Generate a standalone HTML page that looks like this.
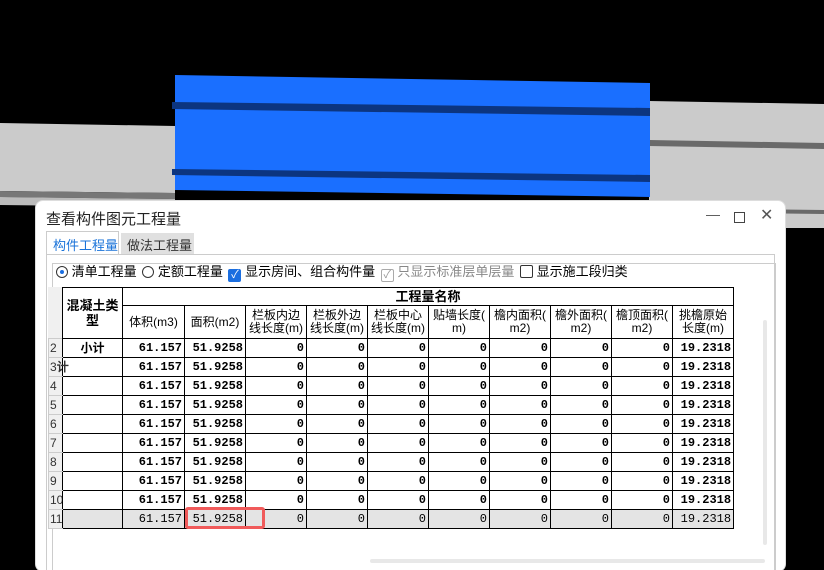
<!DOCTYPE html>
<html><head><meta charset="utf-8"><style>
*{margin:0;padding:0;box-sizing:border-box}
html,body{width:824px;height:570px;overflow:hidden}
body{background:#000;position:relative;font-family:"Liberation Sans","Noto Sans CJK SC",sans-serif;font-size:12px;color:#000}
.a{position:absolute}
table{border-collapse:collapse;position:absolute;left:48px;top:287px;table-layout:fixed;width:685px}
td{border:1px solid #000;height:19px;font-family:"Liberation Mono","Noto Sans CJK SC",monospace;font-size:12px;font-weight:bold;text-align:right;padding:0 2px;white-space:nowrap;overflow:hidden;line-height:17px}
td.h{font-family:"Liberation Sans","Noto Sans CJK SC",sans-serif;font-weight:normal;text-align:center;line-height:13px;font-size:12px;padding:0}
td.rn{background:#f0f0f0;border-color:#ccc;border-right:1px solid #000;color:#333;font-weight:normal;text-align:left;padding:0 1px;font-family:"Liberation Sans",sans-serif}
tr.last td{background:#e4e4e4;font-weight:normal}
tr.last td.rn{background:#f0f0f0}
</style></head><body>
<svg class="a" style="left:0;top:0" width="824" height="240">
<polygon points="0,123 175,126 175,193 0,191" fill="#cbcbcb"/>
<polygon points="0,191 175,193 175,199 0,197" fill="#777"/>
<polygon points="0,197 175,199 175,207 0,205" fill="#bbb"/>
<polygon points="649,101 824,104 824,228 649,228" fill="#cbcbcb"/>
<polygon points="649,140 824,143 824,149 649,146" fill="#6a6a6a"/>
<polygon points="649,208 824,210 824,214 649,212" fill="#6a6a6a"/>
<polygon points="175,75 650,83 650,197 175,190" fill="#1a6fff"/>
<polygon points="172,102 650,108 650,116 172,109" fill="#0c3580"/>
<polygon points="172,169 650,175 650,182 172,175" fill="#0c3580"/>
</svg>
<div class="a" style="left:35px;top:200px;width:751px;height:372px;background:#fff;border-radius:8px;border:1px solid #ddd"></div>
<div class="a" style="left:46px;top:208px;font-size:15px;color:#222">查看构件图元工程量</div>
<div class="a" style="left:706px;top:206px;font-size:14px;color:#555">—</div>
<div class="a" style="left:734px;top:212px;width:11px;height:11px;border:1px solid #444"></div>
<div class="a" style="left:760px;top:205px;font-size:16px;color:#555">✕</div>
<div class="a" style="left:46px;top:231px;width:73px;height:24px;background:#fff;border:1px solid #ccc;border-bottom:none;color:#1a73d9;font-size:13px;padding:3px 0 0 6px">构件工程量</div>
<div class="a" style="left:121px;top:233px;width:73px;height:21px;background:#e0e0e0;color:#333;font-size:13px;padding:2px 0 0 6px">做法工程量</div>
<div class="a" style="left:46px;top:254px;width:729px;height:320px;border:1px solid #ccc;border-bottom:none"></div>
<div class="a" style="left:52px;top:263px;width:724px;height:310px;border:1px solid #ccc"></div>
<div class="a" style="left:56px;top:264px;font-size:13px;white-space:nowrap;line-height:16px">
<span style="display:inline-block;width:12px;height:12px;border:1px solid #333;border-radius:50%;vertical-align:-2px;position:relative"><span style="position:absolute;left:3px;top:3px;width:4px;height:4px;background:#1a6ee0;border-radius:50%"></span></span> 清单工程量
<span style="display:inline-block;width:12px;height:12px;border:1px solid #333;border-radius:50%;vertical-align:-2px;margin-left:2px"></span> 定额工程量
<span style="display:inline-block;width:13px;height:13px;background:#1a6ee0;border-radius:2px;vertical-align:-2px;margin-left:2px;color:#fff;font-size:11px;line-height:13px;text-align:center">✓</span> 显示房间、组合构件量
<span style="display:inline-block;width:13px;height:13px;border:1px solid #aaa;border-radius:2px;vertical-align:-2px;margin-left:2px;color:#999;font-size:11px;line-height:11px;text-align:center">✓</span><span style="color:#888"> 只显示标准层单层量</span>
<span style="display:inline-block;width:13px;height:13px;border:1px solid #333;border-radius:2px;vertical-align:-2px;margin-left:2px"></span> 显示施工段归类
</div>
<div class="a" style="left:48px;top:287px;width:14px;height:51px;background:#f0f0f0"></div>
<table>
<colgroup><col style="width:14px"><col style="width:60px"><col style="width:62px"><col style="width:61px"><col style="width:61px"><col style="width:61px"><col style="width:61px"><col style="width:61px"><col style="width:61px"><col style="width:61px"><col style="width:61px"><col style="width:61px"></colgroup>
<tr><td class="rn" rowspan="2" style="border:none;background:#f0f0f0"></td><td class="h" rowspan="2" style="font-weight:bold;font-size:13px;line-height:15px">混凝土类<br>型</td><td class="h" colspan="10" style="font-weight:bold;font-size:13px;height:18px">工程量名称</td></tr>
<tr style="height:33px"><td class="h">体积(m3)</td><td class="h">面积(m2)</td><td class="h">栏板内边<br>线长度(m)</td><td class="h">栏板外边<br>线长度(m)</td><td class="h">栏板中心<br>线长度(m)</td><td class="h">贴墙长度(<br>m)</td><td class="h">檐内面积(<br>m2)</td><td class="h">檐外面积(<br>m2)</td><td class="h">檐顶面积(<br>m2)</td><td class="h">挑檐原始<br>长度(m)</td></tr>
<tr><td class="rn">2</td><td style="text-align:center;font-family:'Liberation Sans','Noto Sans CJK SC',sans-serif">小计</td><td>61.157</td><td>51.9258</td><td>0</td><td>0</td><td>0</td><td>0</td><td>0</td><td>0</td><td>0</td><td>19.2318</td></tr>
<tr><td class="rn" style="overflow:visible">3<span style="position:absolute;font-weight:bold">计</span></td><td></td><td>61.157</td><td>51.9258</td><td>0</td><td>0</td><td>0</td><td>0</td><td>0</td><td>0</td><td>0</td><td>19.2318</td></tr>
<tr><td class="rn">4</td><td></td><td>61.157</td><td>51.9258</td><td>0</td><td>0</td><td>0</td><td>0</td><td>0</td><td>0</td><td>0</td><td>19.2318</td></tr>
<tr><td class="rn">5</td><td></td><td>61.157</td><td>51.9258</td><td>0</td><td>0</td><td>0</td><td>0</td><td>0</td><td>0</td><td>0</td><td>19.2318</td></tr>
<tr><td class="rn">6</td><td></td><td>61.157</td><td>51.9258</td><td>0</td><td>0</td><td>0</td><td>0</td><td>0</td><td>0</td><td>0</td><td>19.2318</td></tr>
<tr><td class="rn">7</td><td></td><td>61.157</td><td>51.9258</td><td>0</td><td>0</td><td>0</td><td>0</td><td>0</td><td>0</td><td>0</td><td>19.2318</td></tr>
<tr><td class="rn">8</td><td></td><td>61.157</td><td>51.9258</td><td>0</td><td>0</td><td>0</td><td>0</td><td>0</td><td>0</td><td>0</td><td>19.2318</td></tr>
<tr><td class="rn">9</td><td></td><td>61.157</td><td>51.9258</td><td>0</td><td>0</td><td>0</td><td>0</td><td>0</td><td>0</td><td>0</td><td>19.2318</td></tr>
<tr><td class="rn">10</td><td></td><td>61.157</td><td>51.9258</td><td>0</td><td>0</td><td>0</td><td>0</td><td>0</td><td>0</td><td>0</td><td>19.2318</td></tr>
<tr class="last"><td class="rn">11</td><td></td><td>61.157</td><td>51.9258</td><td>0</td><td>0</td><td>0</td><td>0</td><td>0</td><td>0</td><td>0</td><td>19.2318</td></tr>
</table>
<div class="a" style="left:185px;top:507px;width:80px;height:22px;border:3px solid #f05a5a;border-radius:3px"></div>
<div class="a" style="left:763px;top:320px;width:4px;height:225px;background:#e8e8e8;border-radius:2px"></div>
<div class="a" style="left:370px;top:559px;width:395px;height:4px;background:#e8e8e8;border-radius:2px"></div>
</body></html>
